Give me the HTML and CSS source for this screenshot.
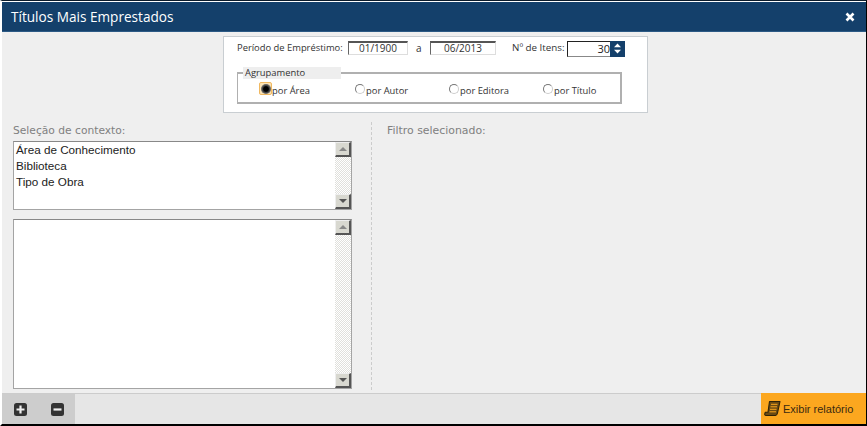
FILE: index.html
```html
<!DOCTYPE html>
<html lang="pt">
<head>
<meta charset="utf-8">
<title>Títulos Mais Emprestados</title>
<link rel="stylesheet" href="styles.css">
</head>
<body>
<div class="window">
  <header class="titlebar">
    <h1 class="title">Títulos Mais Emprestados</h1>
    <svg class="close" width="10" height="10" viewBox="0 0 10 10"><path d="M1.5 1.5 8.5 8.5M8.5 1.5 1.5 8.5" stroke="#fff" stroke-width="2.6" fill="none"/></svg>
  </header>
  <main class="content">
    <section class="panel">
      <div class="period">
        <span class="lbl lbl-period">Período de Empréstimo:</span>
        <span class="datebox box-a">01/1900</span>
        <span class="lbl lbl-a">a</span>
        <span class="datebox box-b">06/2013</span>
        <span class="lbl lbl-items">Nº de Itens:</span>
        <span class="spin">
          <span class="spin-value">30</span>
          <span class="spin-btn">
            <svg width="15" height="15" viewBox="0 0 15 15"><path d="M7.5 2.500 11 6.200H4zM7.500 12.500 11 8.800H4z" fill="#fff"/></svg>
          </span>
        </span>
      </div>
      <fieldset class="group">
        <legend class="group-legend">Agrupamento</legend>
        <div class="radios">
          <label class="radio radio-on"><span class="dot-wrap"><span class="dot"></span></span>por Área</label>
          <label class="radio"><span class="dot-wrap"><span class="dot"></span></span>por Autor</label>
          <label class="radio"><span class="dot-wrap"><span class="dot"></span></span>por Editora</label>
          <label class="radio"><span class="dot-wrap"><span class="dot"></span></span>por Título</label>
        </div>
      </fieldset>
    </section>
    <section class="columns">
      <div class="col-left">
        <h2 class="head">Seleção de contexto:</h2>
        <div class="listbox list-top">
          <ul class="items">
            <li>Área de Conhecimento</li>
            <li>Biblioteca</li>
            <li>Tipo de Obra</li>
          </ul>
          <div class="scroll">
            <span class="sbtn"><span class="arrow-up"></span></span>
            <span class="track"></span>
            <span class="sbtn"><span class="arrow-down"></span></span>
          </div>
        </div>
        <div class="listbox list-bottom">
          <ul class="items"></ul>
          <div class="scroll">
            <span class="sbtn"><span class="arrow-up"></span></span>
            <span class="track"></span>
            <span class="sbtn"><span class="arrow-down"></span></span>
          </div>
        </div>
      </div>
      <div class="col-right">
        <h2 class="head head-filter">Filtro selecionado:</h2>
      </div>
    </section>
  </main>
  <footer class="footer">
    <div class="tools">
      <svg width="13" height="13" viewBox="0 0 13 13"><rect width="13" height="13" rx="2.5" fill="#333"/><path d="M6.500 2.500v8M2.500 6.500h8" stroke="#eee" stroke-width="2.200"/></svg>
      <svg width="13" height="13" viewBox="0 0 13 13"><rect width="13" height="13" rx="2.5" fill="#333"/><path d="M2.500 6.500h8" stroke="#eee" stroke-width="2.200"/></svg>
    </div>
    <button class="report" type="button">
      <svg width="17" height="17" viewBox="0 0 17 17"><path d="M5.500 1.500H16L13.500 13c-.3 1.500-1 2.500-2 2.500H2c-1 0-1.500-.8-1.200-1.800l.5-1.500H4z" fill="#6b4a12" stroke="#2e2208" stroke-width="1.100" stroke-linejoin="round"/><path d="M7 4.300h6.500M6.500 6.800h6.500M6 9.300h6.500M5.500 11.800h6.500" stroke="#fca71f" stroke-width="1"/></svg>
      <span>Exibir relatório</span>
    </button>
  </footer>
</div>
</body>
</html>
```
FILE: styles.css
```css
* { box-sizing: border-box; }
html, body { margin: 0; padding: 0; background: #000; }
.window {
  width: 867px;
  height: 426px;
  display: flex;
  flex-direction: column;
  background: #efefef;
  border-top: 1px solid #0c1c2c;
  border-left: 2px solid #fff;
  border-right: 1px solid #000;
  border-bottom: 2px solid #000;
  box-shadow: inset 0 1px 0 #fff;
  padding-top: 1px;
  font-family: "Open Sans", sans-serif;
  overflow: hidden;
}
.titlebar {
  height: 30px;
  flex: none;
  display: flex;
  align-items: center;
  justify-content: space-between;
  background: #14406b;
  padding: 0 11px 0 9px;
  border-bottom: 1px solid #2c5a85;
}
.title { margin: 0; font-size: 13.6px; font-weight: 400; color: #fff; line-height: 18px; }
.close { display: block; }
.content { flex: 1; display: flex; flex-direction: column; min-height: 0; }
.panel {
  width: 425px;
  height: 77px;
  margin: 4px 0 0 221px;
  background: #fff;
  border: 1px solid #c9ced2;
  flex: none;
  padding: 4px 0 0 13px;
}
.period { display: flex; align-items: flex-start; height: 16px; font-size: 10px; color: #333; white-space: nowrap; }
.period > * { flex: none; }
.lbl { line-height: 14px; font-family: "Open Sans", sans-serif; }
.lbl-period { width: 111px; font-size: 9.4px; }
.lbl-a { width: 22px; padding-left: 8px; }
.lbl-items { width: 71px; padding-left: 16px; font-size: 9.8px; }
.datebox {
  height: 14px;
  border: 1px solid #999;
  border-top: 2px solid #555;
  border-left-color: #666;
  border-bottom-color: #ddd;
  border-right-color: #ddd;
  text-align: center;
  line-height: 11px;
  color: #333;
  background: #fff;
}
.box-a { width: 60px; }
.box-b { width: 66px; }
.spin { display: flex; width: 58px; height: 16px; }
.spin-value {
  width: 43px;
  border: 1px solid #222;
  border-bottom-color: #888;
  border-right: 0;
  text-align: right;
  line-height: 14px;
  font-size: 11px;
  color: #222;
}
.spin-btn { width: 15px; height: 16px; background: #14406b; }
.spin-btn svg { display: block; }
.group {
  margin: 10px 0 0 0;
  width: 385px;
  height: 37px;
  padding: 0 0 0 5px;
  border: 2px solid #b0b0b0;
  border-left-width: 1px;
  min-width: 0;
}
.group-legend {
  width: 98px;
  height: 12px;
  padding: 0 0 0 2px;
  background: #eee;
  font-size: 9.4px;
  line-height: 12px;
  color: #333;
}
.radios { display: flex; padding-left: 16px; margin-top: 5px; white-space: nowrap; }
.radio { width: 94px; flex: none; display: flex; align-items: flex-start; font-size: 9.4px; line-height: 14px; color: #333; }
.dot-wrap {
  width: 13px;
  height: 13px;
  flex: none;
  margin-top: -2px;
  display: flex;
  align-items: center;
  justify-content: center;
}
.dot { width: 10px; height: 10px; border-radius: 50%; border: 1px solid #777; border-right-color: #ccc; border-bottom-color: #ccc; background: #fff; }
.radio-on .dot-wrap { background: #fbe3b5; border: 1px solid #f0b860; border-radius: 2px; }
.radio-on .dot { width: 8px; height: 8px; background: #000; box-shadow: 0 0 0 1px #666; border-color: #444; }
.columns { flex: 1; display: flex; min-height: 0; padding: 9px 0 3px 11px; }
.col-left { width: 339px; flex: none; }
.col-right { flex: 1; margin-left: 19px; border-left: 1px dashed #ccc; padding-left: 15px; }
.head {
  margin: 0;
  height: 19px;
  font-family: "DejaVu Sans", sans-serif;
  font-size: 10.7px;
  font-weight: 400;
  line-height: 17px;
  color: #808080;
  white-space: nowrap;
}
.head-filter { font-size: 10.9px; }
.listbox { display: flex; width: 339px; background: #fff; border: 1px solid #a4a4a4; border-top-color: #888; }
.list-top { height: 69px; margin-bottom: 9px; }
.list-bottom { height: 170px; }
.items { flex: 1; list-style: none; margin: 0; padding: 0 0 0 2px; font-family: "Liberation Sans", sans-serif; font-size: 11.7px; line-height: 16px; color: #222; }
.scroll { width: 16px; display: flex; flex-direction: column; flex: none; }
.sbtn {
  height: 15px;
  flex: none;
  display: flex;
  align-items: center;
  justify-content: center;
  background: #d8d8d0;
  border: 1px solid #eee;
  border-right: 2px solid #555;
  border-bottom: 2px solid #555;
}
.track {
  flex: 1;
  background: conic-gradient(#e0e0dc 25%, #fff 0 50%, #e0e0dc 0 75%, #fff 0) 0 0 / 2px 2px;
}
.arrow-up { width: 0; height: 0; border-left: 4px solid transparent; border-right: 4px solid transparent; border-bottom: 4px solid #888; }
.arrow-down { width: 0; height: 0; border-left: 4px solid transparent; border-right: 4px solid transparent; border-top: 4px solid #555; }
.footer {
  height: 31px;
  flex: none;
  display: flex;
  justify-content: space-between;
  background: #e6e6e6;
  border-top: 1px solid #ccc;
}
.tools { width: 73px; display: flex; align-items: center; gap: 24px; padding: 0 0 0 12px; background: #cdcdcd; }
.tools svg { display: block; }
.report {
  width: 105px;
  border: 0;
  margin: -1px 0 0 0;
  padding: 0 0 0 3px;
  background: #fca71f;
  display: flex;
  align-items: center;
  gap: 2px;
  font-family: "Liberation Sans", sans-serif;
  font-size: 11px;
  color: #3a2a10;
}
.report svg { flex: none; }
```
